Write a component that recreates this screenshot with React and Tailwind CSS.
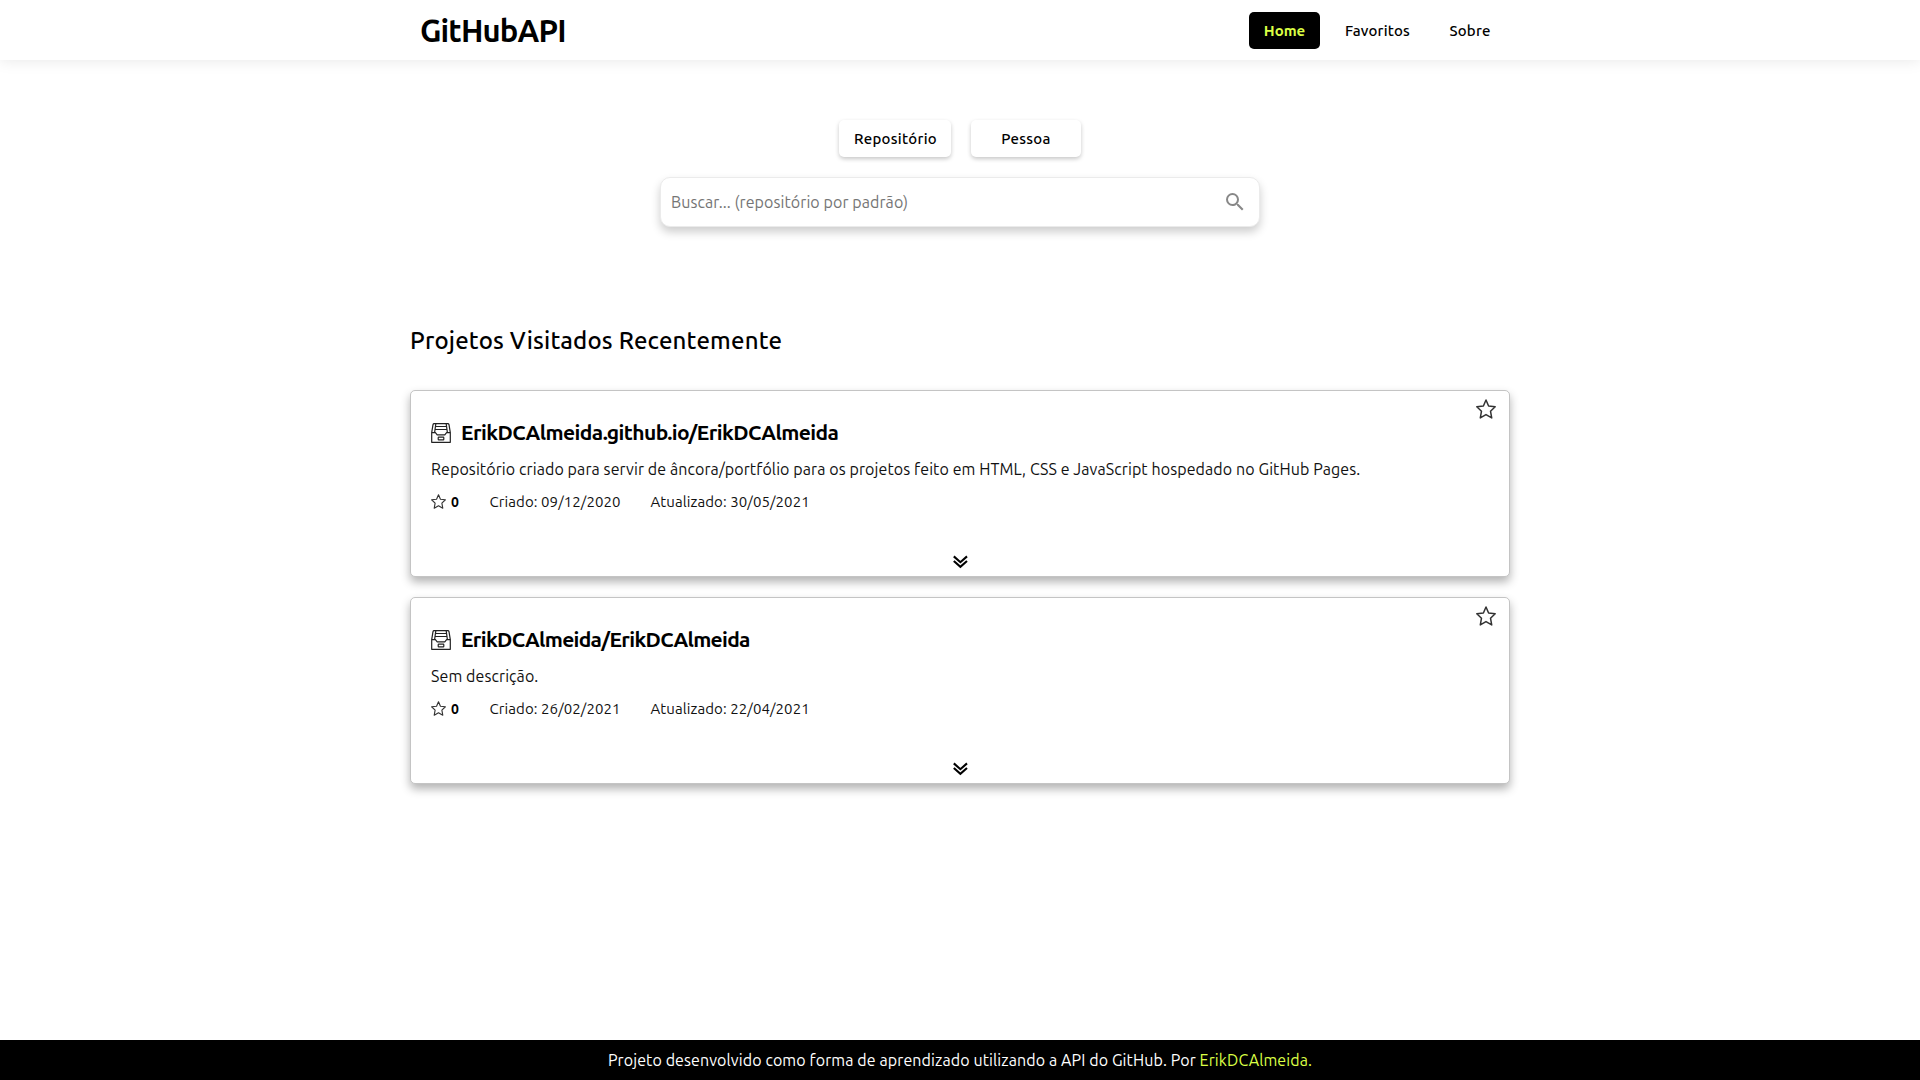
import React from "react";

const projects = [
  {
    name: "ErikDCAlmeida.github.io/ErikDCAlmeida",
    nameTracking: "tracking-[-0.58px]",
    description:
      "Repositório criado para servir de âncora/portfólio para os projetos feito em HTML, CSS e JavaScript hospedado no GitHub Pages.",
    created: "09/12/2020",
    updated: "30/05/2021",
  },
  {
    name: "ErikDCAlmeida/ErikDCAlmeida",
    nameTracking: "tracking-[-0.68px]",
    description: "Sem descrição.",
    created: "26/02/2021",
    updated: "22/04/2021",
  },
];

function Star({ className }) {
  return (
    <svg viewBox="0 0 20 20" className={className} fill="none" stroke="currentColor" strokeWidth="1.5" strokeLinejoin="round">
      <path d="M10 1 L12.6 7 L19.2 7.7 L14.5 12.2 L15.7 18.9 L10 15.6 L4.3 18.9 L5.5 12.2 L0.8 7.7 L7.4 7 Z" />
    </svg>
  );
}

function ArchiveIcon() {
  return (
    <svg viewBox="0 0 20 20" className="size-5 shrink-0 text-[#222]" fill="none" stroke="currentColor" strokeWidth="1.2" strokeLinejoin="round">
      <path d="M0.7 9.6 L2 1.6 Q2.2 0.7 3.2 0.7 H16.8 Q17.8 0.7 18 1.6 L19.3 9.6" />
      <path d="M4.4 3.5 H15.6 M4 6.5 H16 M4.8 0.9 L3.6 9.6 M15.2 0.9 L16.4 9.6" />
      <path d="M0.7 9.6 H4.4 L6.2 11.8 H13.8 L15.6 9.6 H19.3 V19.3 H0.7 Z" />
      <rect x="7.2" y="14.1" width="5.6" height="2.8" rx="0.6" />
    </svg>
  );
}

function ProjectCard({ project }) {
  return (
    <article className="relative flex h-[187px] flex-col rounded-[5px] border border-[#c4c4c4] bg-white px-5 pt-[27px] shadow-[0_5px_10px_rgba(0,0,0,0.3)]">
      <button className="absolute top-2 right-[13px]" aria-label="Favoritar">
        <Star className="size-5 text-[#333]" />
      </button>
      <h3 className="flex h-[30px] items-center gap-[10px]">
        <ArchiveIcon />
        <span className={`pb-0.5 text-[21px] leading-7 font-bold ${project.nameTracking}`}>{project.name}</span>
      </h3>
      <p className="mt-[9px] text-[16px] leading-6 tracking-[0.09px] text-[#111]">{project.description}</p>
      <div className="mt-[11px] flex items-center text-[15px] leading-5 tracking-[0.08px] text-[#111]">
        <Star className="mb-px size-[15px] text-[#333]" />
        <span className="ml-[5px] w-[38.5px] text-[14px] font-bold text-black">0</span>
        <span className="w-[161px]">Criado: {project.created}</span>
        <span>Atualizado: {project.updated}</span>
      </div>
      <button className="mt-[43px] self-center" aria-label="Expandir">
        <svg viewBox="0 0 16 14" className="h-[14px] w-4" fill="none" stroke="#000" strokeWidth="2.1">
          <path d="M1.8 1.4 L8.4 7.2 L15 1.4 M1.8 6 L8.4 11.8 L15 6" />
        </svg>
      </button>
    </article>
  );
}

export default function App() {
  return (
    <div className="flex min-h-screen flex-col bg-white font-['Ubuntu','Noto_Sans',sans-serif] text-black">
      <header className="h-[60px] bg-white shadow-[0_0_15px_rgba(0,0,0,0.1)]">
        <div className="mx-auto flex h-full w-[1100px] items-center justify-between pr-[6px] pl-[10px]">
          <h1 className="pt-px text-[31px] leading-[59px] font-bold tracking-[-0.85px]">GitHubAPI</h1>
          <nav className="mt-px flex h-[37px] gap-[10px] text-center text-[15px] leading-[38px] font-medium tracking-[0.2px]">
            <a className="h-[37px] w-[71px] rounded-[5px] bg-black font-bold tracking-normal text-[#dbff45]">Home</a>
            <a className="w-[95px]">Favoritos</a>
            <a className="w-[69px] pl-px">Sobre</a>
          </nav>
        </div>
      </header>

      <main className="mx-auto w-[1100px] flex-1">
        <section className="flex flex-col items-center pt-[60px]">
          <div className="flex gap-5 text-[15px] leading-[38px] font-medium tracking-[0.3px]">
            <button className="h-[37px] w-[112px] rounded-[5px] bg-white pl-px shadow-[0_2px_4px_rgba(0,0,0,0.22)]">Repositório</button>
            <button className="h-[37px] w-[110px] rounded-[5px] bg-white shadow-[0_2px_4px_rgba(0,0,0,0.22)]">Pessoa</button>
          </div>
          <div className="mt-5 flex h-[50px] w-[600px] items-center justify-between rounded-[10px] border border-[#ebebeb] bg-white pr-3 pl-[10px] shadow-[0_5px_10px_rgba(0,0,0,0.2)]">
            <span className="text-[16px] tracking-[0.08px] text-[#757575]">Buscar... (repositório por padrão)</span>
            <svg viewBox="0 0 24 24" className="mb-px size-6 fill-[#888]">
              <path d="M15.5 14h-.79l-.28-.27A6.471 6.471 0 0 0 16 9.5 6.5 6.5 0 1 0 9.5 16c1.61 0 3.09-.59 4.23-1.57l.27.28v.79l5 4.99L20.49 19l-4.99-5zm-6 0C7.01 14 5 11.99 5 9.5S7.01 5 9.5 5 14 7.01 14 9.5 11.99 14 9.5 14z" />
            </svg>
          </div>
        </section>

        <section className="mt-24">
          <h2 className="text-[24px] leading-9 font-medium tracking-[0.18px]">Projetos Visitados Recentemente</h2>
          <div className="mt-[31px] flex flex-col gap-5">
            {projects.map((p) => (
              <ProjectCard key={p.name} project={p} />
            ))}
          </div>
        </section>
      </main>

      <footer className="h-10 bg-black pt-px text-center text-[16px] leading-[39px] tracking-[0.1px] text-white">
        Projeto desenvolvido como forma de aprendizado utilizando a API do GitHub. Por <a className="text-[#dbff45]">ErikDCAlmeida.</a>
      </footer>
    </div>
  );
}
